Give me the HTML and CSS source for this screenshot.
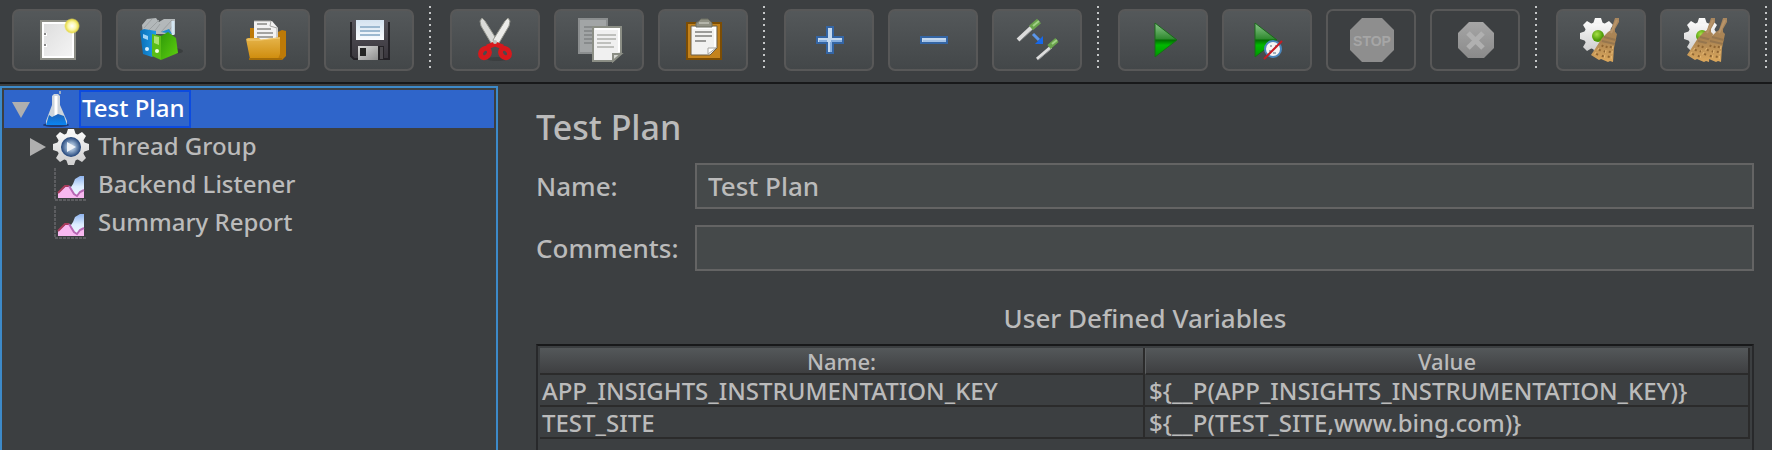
FILE: index.html
```html
<!DOCTYPE html>
<html lang="en">
<head>
<meta charset="utf-8">
<title>Test Plan</title>
<link rel="stylesheet" href="styles.css">
</head>
<body>
<svg class="defs" aria-hidden="true">
  <defs>
    <linearGradient id="paper" x1="0" y1="0" x2="1" y2="1"><stop offset="0" stop-color="#dcdcdc"/><stop offset="1" stop-color="#f6f6f6"/></linearGradient>
    <linearGradient id="folder" x1="0" y1="0" x2="0" y2="1"><stop offset="0" stop-color="#e6b54c"/><stop offset="1" stop-color="#cf8c0c"/></linearGradient>
    <linearGradient id="blue" x1="0" y1="0" x2="1" y2="0"><stop offset="0" stop-color="#0a6fb8"/><stop offset="1" stop-color="#1f9be6"/></linearGradient>
    <linearGradient id="green" x1="0" y1="0" x2="1" y2="1"><stop offset="0" stop-color="#2f9a08"/><stop offset="1" stop-color="#5fd010"/></linearGradient>
    <linearGradient id="disk" x1="0" y1="0" x2="0" y2="1"><stop offset="0" stop-color="#55525a"/><stop offset="1" stop-color="#39363c"/></linearGradient>
    <linearGradient id="label" x1="0" y1="0" x2="0" y2="1"><stop offset="0" stop-color="#d4e2f0"/><stop offset="1" stop-color="#fafcff"/></linearGradient>
    <linearGradient id="metal" x1="0" y1="0" x2="1" y2="1"><stop offset="0" stop-color="#dadada"/><stop offset="1" stop-color="#8e8e8e"/></linearGradient>
    <linearGradient id="play" x1="0" y1="0" x2="0" y2="1"><stop offset="0" stop-color="#8cc68c"/><stop offset=".47" stop-color="#2f8a2f"/><stop offset=".5" stop-color="#006c00"/><stop offset=".65" stop-color="#00b800"/><stop offset="1" stop-color="#009800"/></linearGradient>
    <linearGradient id="broom" x1="0" y1="0" x2="0" y2="1"><stop offset="0" stop-color="#a88760"/><stop offset=".5" stop-color="#ab8452"/><stop offset="1" stop-color="#dca85c"/></linearGradient>
    <linearGradient id="gearfill" x1="0" y1="0" x2="0" y2="1"><stop offset="0" stop-color="#fafafa"/><stop offset="1" stop-color="#cfcfcf"/></linearGradient>
    <linearGradient id="grey" x1="0" y1="0" x2="0" y2="1"><stop offset="0" stop-color="#a6a6a6"/><stop offset="1" stop-color="#8a8a8a"/></linearGradient>
    <linearGradient id="sky" x1="0" y1="0" x2="0" y2="1"><stop offset="0" stop-color="#8fb4ee"/><stop offset=".5" stop-color="#dcecff"/><stop offset="1" stop-color="#f2f9ff"/></linearGradient>
    <linearGradient id="liquid" x1="0" y1="0" x2="0" y2="1"><stop offset="0" stop-color="#1d62b8"/><stop offset="1" stop-color="#0a86f2"/></linearGradient>
    <radialGradient id="hub"><stop offset="0" stop-color="#dfe7f0"/><stop offset=".45" stop-color="#8ea9c9"/><stop offset="1" stop-color="#1f4278"/></radialGradient>
    <radialGradient id="lime" cx=".4" cy=".35"><stop offset="0" stop-color="#a8e048"/><stop offset="1" stop-color="#4f9c08"/></radialGradient>
    <radialGradient id="sun"><stop offset="0" stop-color="#fff"/><stop offset=".5" stop-color="#fbf6a8"/><stop offset=".8" stop-color="#e8dc50"/><stop offset="1" stop-color="#e8dc50" stop-opacity="0"/></radialGradient>
    <g id="gear">
      <circle r="14"/>
      <g id="teeth"><path d="M-5-12-3-18H3L5-12ZM-5 12-3 18H3L5 12ZM12-5 18-3V3L12 5ZM-12-5-18-3V3L-12 5Z"/></g>
      <path d="M-6-12-11-15-15-11-12-6ZM6-12 11-15 15-11 12-6ZM-6 12-11 15-15 11-12 6ZM6 12 11 15 15 11 12 6Z"/>
    </g>
    <g id="brush">
      <path d="M36 0H40V4L36 11V14L38 16 35 30 34 44 31 43 29 44 22 41 20 42 12 37 16 31 23 20 29 14 32 12Z" fill="url(#broom)"/>
      <path d="M25 19 37 22M23 23 36 26" stroke="#96764e" stroke-width="2"/>
      <path d="M24 27 17 38M28 28 23 40M32 28 29 42" stroke="#8f6532" stroke-width="2" stroke-dasharray="2 3"/>
      <path d="M20 30 15 37M27 32 25 41M34 28 32 42" stroke="#e6b872" stroke-dasharray="3 2"/>
      <path d="M38 2 32 15" stroke="#b8946a" stroke-width="2"/>
    </g>
    <g id="chart">
      <path d="M2 1V33H33" fill="none" stroke="#5c5d60" stroke-width="2" stroke-dasharray="3 1"/>
      <path d="M16 23 20 17 22 12 27 9H31V30H24Z" fill="url(#sky)"/>
      <path d="M5 31V26L13 19H17L21 27 24 29 27 25 31 24V31Z" fill="#f8b8f0"/>
      <path d="M5 26 12 19H16" fill="none" stroke="#a83c5c" stroke-width="2"/>
      <path d="M16 19 21 27 24 29 27 25 31 23" fill="none" stroke="#b868b4" stroke-width="2"/>
    </g>
  </defs>
</svg>

<div class="toolbar" role="toolbar" aria-label="Main toolbar">
  <button class="tool" aria-label="New"><svg class="icon" viewBox="0 0 44 44"><path d="M6 3H40V41H6Z" fill="url(#paper)" stroke="#8c8d86" stroke-width="2"/><path d="M8 5H38V39H8Z" fill="none" stroke="#fff" stroke-width="2"/><path d="M9 15h3v3H9zM9 26h3v3H9z" fill="#fff"/><path d="M9 15h2v2H9zM9 26h2v2H9z" fill="#888"/><circle cx="37" cy="8" r="8" fill="url(#sun)"/></svg></button>
  <button class="tool" aria-label="Templates"><svg class="icon" viewBox="0 0 44 44"><ellipse cx="35" cy="33" rx="9" ry="3" fill="#2c2f30" opacity=".5"/><path d="M3 7 8 1 17 0 20 4 25 1 36 1V16H4Z" fill="#b3b8ba"/><path d="M5 10 13 1M9 13 20 2M15 14 21 6M22 14 33 2M28 15 35 6" stroke="#9da1a3"/><path d="M34 3V17" stroke="#d3e6f2" stroke-width="3"/><path d="M1 13 5 11 17 13V36L13 39 4 36Z" fill="url(#blue)"/><path d="M22 14 30 11 33 16Z" fill="#238cc9"/><path d="M4 16 9 18V22L4 20Z" fill="#9fd4f7"/><circle cx="8" cy="31" r="2" fill="#d6eefc"/><path d="M13 16 22 18V42L13 38Z" fill="#59bd16"/><path d="M22 18 29 14 37 20 39 35 22 42Z" fill="url(#green)"/><path d="M15 18 20 19V27L15 25Z" fill="#a9e071"/><circle cx="18" cy="33" r="2" fill="#efffe2"/></svg></button>
  <button class="tool" aria-label="Open"><svg class="icon" viewBox="0 0 44 44"><path d="M7 10H12V14H35L39 12 43 13V38L39 42H7Z" fill="#bd7a08"/><path d="M11 3H29L35 10V24H11Z" fill="#f2f2f2"/><path d="M11 3H28L27 8 34 10V24" fill="none" stroke="#a7a7a4"/><path d="M14 6H24M14 11H28M14 15H30M14 19H30" stroke="#a3a3a0" stroke-width="2"/><path d="M3 21 5 20H16L18 22 37 19V36L35 41H7Z" fill="url(#folder)"/><path d="M4 22H17L37 20" fill="none" stroke="#f2cd78"/><path d="M6 41H39" stroke="#a46c08" stroke-width="2"/></svg></button>
  <button class="tool" aria-label="Save"><svg class="icon" viewBox="0 0 44 44"><path d="M5 2H41L43 4V42H7L3 38V4Z" fill="url(#disk)"/><path d="M4 4V38L7 41H42V4" fill="none" stroke="#232126" stroke-width="2"/><path d="M9 2H37V22H9Z" fill="url(#label)"/><path d="M13 9H33M13 13H33M13 17H33" stroke="#9cb8d0" stroke-width="2"/><path d="M11 28H37V42H11Z" fill="#252327"/><path d="M11 28H31V42H11Z" fill="url(#metal)"/><path d="M33 29H36V41H33Z" fill="#4e4c50"/><path d="M13 30H19V38H13Z" fill="#252525"/></svg></button>
  <span class="separator"></span>
  <button class="tool" aria-label="Cut"><svg class="icon" viewBox="0 0 44 44"><ellipse cx="24" cy="41" rx="10" ry="2" fill="#2c2f30" opacity=".4"/><path d="M9 0 7 3 8 8 18 25 22 26 24 22 12 3Z" fill="#dadbd8" stroke="#96978f"/><path d="M35 0 37 3 36 8 26 25 22 26 20 22 32 3Z" fill="#ecece9" stroke="#96978f"/><g fill="none" stroke="#d8181c" stroke-width="5"><ellipse cx="12" cy="35" rx="4" ry="5" transform="rotate(40 12 35)"/><ellipse cx="32" cy="35" rx="4" ry="5" transform="rotate(-40 32 35)"/><path d="M14 29 22 26 30 29"/></g><circle cx="22" cy="24" r="2" fill="#c2c3bf"/></svg></button>
  <button class="tool" aria-label="Copy"><svg class="icon" viewBox="0 0 44 44"><path d="M2 1H30V35H2Z" fill="#a2a5a6" stroke="#8b8e8f" stroke-width="2"/><path d="M7 9H20M7 13H20M7 17H16M7 21H16M7 25H16" stroke="#888b8c" stroke-width="2"/><path d="M16 9H44V35L36 43H16Z" fill="#f0f0f0" stroke="#8b8e85" stroke-width="2"/><path d="M18 11H42V34" fill="none" stroke="#fff" stroke-width="2"/><path d="M20 17H39M20 21H39M20 25H34M20 29H37" stroke="#bfc0bd" stroke-width="2"/><path d="M36 43V36H44Z" fill="#d5d6d2" stroke="#8b8e85" stroke-width="2"/></svg></button>
  <button class="tool" aria-label="Paste"><svg class="icon" viewBox="0 0 44 44"><path d="M6 5H40V41H6Z" fill="#c4831c" stroke="#7c4d04" stroke-width="2"/><path d="M10 8H36V30L29 37H10Z" fill="#f2f2f0" stroke="#6e6047"/><path d="M12 10H34V29" fill="none" stroke="#fff" stroke-width="2"/><path d="M14 14H31M14 18H31M14 23H25" stroke="#9b9b98" stroke-width="2"/><path d="M27 36V30H35Z" fill="#fff" stroke="#a7a7a2"/><path d="M15 9V5L18 3 20 1H27L29 3 31 5V9Z" fill="#8f9083" stroke="#6d6e62"/><path d="M18 5H28" stroke="#b4b5aa" stroke-width="2"/></svg></button>
  <span class="separator"></span>
  <button class="tool" aria-label="Expand All"><svg class="icon" viewBox="0 0 44 44"><path d="M20 9H26V19H36V25H26V35H20V25H10V19H20Z" fill="#c4d8ee" stroke="#3465a4" stroke-width="2"/><path d="M24 24V34M12 23H20M24 23H35" stroke="#86aede" stroke-width="2"/></svg></button>
  <button class="tool" aria-label="Collapse All"><svg class="icon" viewBox="0 0 44 44"><path d="M10 19H36V25H10Z" fill="#c4d8ee" stroke="#3465a4" stroke-width="2"/><path d="M12 23H35" stroke="#a4c2e6" stroke-width="2"/></svg></button>
  <button class="tool" aria-label="Toggle"><svg class="icon" viewBox="0 0 44 44"><path d="M3 22 17 9" stroke="#dcdcdc" stroke-width="4"/><path d="M22 41 36 29" stroke="#dcdcdc" stroke-width="3"/><path d="M5 23 18 11M23 42 36 31" stroke="#8b8e8f"/><path d="M16 10 24 3" stroke="#6aa24c" stroke-width="6"/><path d="M34 29 42 22" stroke="#6aa24c" stroke-width="5"/><path d="M18 8 24 3M37 26 42 22" stroke="#9fd084" stroke-width="2"/><path d="M18 16 24 22" stroke="#5b96ea" stroke-width="3"/><path d="M28 18V26H20L23 23 25 21Z" fill="#1668ea"/></svg></button>
  <span class="separator"></span>
  <button class="tool" aria-label="Start"><svg class="icon" viewBox="0 0 44 44"><path d="M14 5 36 22 14 39Z" fill="url(#play)" stroke="#1a6a1a"/></svg></button>
  <button class="tool" aria-label="Start no pauses"><svg class="icon" viewBox="0 0 44 44"><path d="M10 5 32 22 10 39Z" fill="url(#play)" stroke="#1a6a1a"/><circle cx="28" cy="31" r="8" fill="#f4f4f4" stroke="#4a86bd" stroke-width="2"/><path d="M25 28h2M30 28h2M24 33h2M28 35h3" stroke="#a4b0ba" stroke-width="2"/><path d="M19 41 37 23" stroke="#c41c24" stroke-width="2"/></svg></button>
  <button class="tool" aria-label="Stop" disabled><svg class="icon" viewBox="0 0 44 44"><path d="M13 0H33L45 12V32L33 44H13L1 32V12Z" fill="#8e8e8e"/><text class="stop-label" x="23" y="28" text-anchor="middle">STOP</text></svg></button>
  <button class="tool" aria-label="Shutdown" disabled><svg class="icon" viewBox="0 0 44 44"><path d="M16 4H30L41 15V30L31 40H15L5 30V15Z" fill="url(#grey)"/><path d="M15 15 30 30M30 15 15 30" stroke="#b0b0b0" stroke-width="5"/></svg></button>
  <span class="separator"></span>
  <button class="tool" aria-label="Clear"><svg class="icon" viewBox="0 0 44 44"><use href="#gear" x="19" y="18" fill="url(#gearfill)"/><circle cx="19" cy="18" r="6" fill="url(#lime)"/><use href="#brush"/></svg></button>
  <button class="tool" aria-label="Clear All"><svg class="icon" viewBox="0 0 44 44"><use href="#gear" x="19" y="18" fill="url(#gearfill)"/><circle cx="19" cy="18" r="6" fill="url(#lime)"/><use href="#brush" x="-8"/><use href="#brush" x="4"/></svg></button>
  <span class="separator"></span>
</div>

<div class="workspace">
  <nav class="tree" aria-label="Test plan tree">
    <ul class="tree-list">
      <li>
        <div class="node selected">
          <button class="toggle" aria-label="Collapse Test Plan"><svg class="arrow" viewBox="0 0 18 18"><path d="M0 2H18L9 18Z" fill="#afafaf"/></svg></button>
          <svg class="flask" viewBox="0 0 26 36"><ellipse cx="13" cy="34" rx="13" ry="2" fill="#1e3c78"/><path d="M9 5 11 3H15L17 5V14L24 30V34H3V30L9 14Z" fill="#cdd5dc"/><path d="M13 5V28" stroke="#fff" stroke-width="3"/><path d="M17 0V3" stroke="#9aabc4" stroke-width="2"/><path d="M6 24 9 26 15 23 21 25 24 34H3Z" fill="url(#liquid)"/></svg>
          <span class="node-label">Test Plan</span>
        </div>
        <ul class="tree-list nested">
          <li class="node">
            <button class="toggle" aria-label="Expand Thread Group"><svg class="arrow" viewBox="0 0 18 18"><path d="M1 0 17 9 1 18Z" fill="#afafaf"/></svg></button>
            <svg class="node-icon" viewBox="-18 -18 36 36"><use href="#gear" fill="url(#gearfill)"/><circle r="10" fill="url(#hub)"/><path d="M-4-5 5 0-4 5Z" fill="#edf2f7"/></svg>
            <span class="node-label">Thread Group</span>
          </li>
          <li class="node">
            <span class="toggle"></span>
            <svg class="node-icon" viewBox="0 0 36 36"><use href="#chart"/></svg>
            <span class="node-label">Backend Listener</span>
          </li>
          <li class="node">
            <span class="toggle"></span>
            <svg class="node-icon" viewBox="0 0 36 36"><use href="#chart"/></svg>
            <span class="node-label">Summary Report</span>
          </li>
        </ul>
      </li>
    </ul>
  </nav>

  <main class="editor">
    <h1 class="title">Test Plan</h1>
    <form class="fields">
      <label for="name">Name:</label>
      <input class="field" id="name" type="text" value="Test Plan">
      <label for="comments">Comments:</label>
      <input class="field" id="comments" type="text">
    </form>
    <h2 class="caption" id="variables">User Defined Variables</h2>
    <div class="table-pane">
      <table class="variables" aria-labelledby="variables">
        <thead><tr><th>Name:</th><th>Value</th></tr></thead>
        <tbody>
          <tr><td>APP_INSIGHTS_INSTRUMENTATION_KEY</td><td>${__P(APP_INSIGHTS_INSTRUMENTATION_KEY)}</td></tr>
          <tr><td>TEST_SITE</td><td>${__P(TEST_SITE,www.bing.com)}</td></tr>
        </tbody>
      </table>
    </div>
  </main>
</div>
</body>
</html>
```
FILE: styles.css
```css
* {
  box-sizing: border-box;
}

body {
  margin: 0;
  height: 100vh;
  display: flex;
  flex-direction: column;
  overflow: hidden;
  background: #3c3f41;
  color: #bbbbbb;
  font-family: "Noto Sans", sans-serif;
  font-size: 26px;
  font-weight: 500;
}

.defs {
  position: absolute;
  width: 0;
  height: 0;
}

.toolbar {
  display: flex;
  align-items: flex-start;
  flex: none;
  gap: 14px;
  padding: 6px 0 11px 12px;
  border-bottom: 2px solid #18191a;
  overflow: hidden;
}

.tool {
  display: flex;
  align-items: center;
  justify-content: center;
  flex: none;
  width: 90px;
  height: 62px;
  margin-top: 3px;
  padding: 0;
  border: 2px solid #585858;
  border-radius: 7px;
  background: linear-gradient(#54585a, #434749);
}

.tool:disabled {
  background: none;
}

.icon {
  width: 44px;
  height: 44px;
  overflow: visible;
}

.stop-label {
  font: bold 14px "Liberation Sans", sans-serif;
  fill: #a6a6a6;
}

.separator {
  flex: none;
  width: 2px;
  height: 62px;
  margin: 0 5px 0 1px;
  background: repeating-linear-gradient(#c4c6c7 0 2px, transparent 2px 6px);
}

.workspace {
  display: flex;
  flex: 1;
  min-height: 0;
}

.tree {
  flex: none;
  width: 498px;
  margin-top: 2px;
  padding: 2px;
  border: 2px solid #3d8ac9;
  border-bottom: 0;
  font-size: 24px;
}

.tree-list {
  margin: 0;
  padding: 0;
  list-style: none;
}

.nested {
  padding-left: 16px;
}

.node {
  display: flex;
  align-items: center;
  height: 38px;
  padding-left: 8px;
}

.nested .node {
  padding-left: 9px;
}

.selected {
  background: #2f65ca;
  color: #ffffff;
}

.toggle {
  display: flex;
  flex: none;
  width: 18px;
  padding: 0;
  border: 0;
  background: none;
}

.arrow {
  width: 18px;
  height: 18px;
}

.flask {
  width: 26px;
  height: 36px;
  margin: 0 10px 0 13px;
}

.node-icon {
  width: 36px;
  height: 36px;
  margin: 0 9px 0 6px;
}

.node-label {
  padding-bottom: 2px;
  line-height: 32px;
}

.selected .node-label {
  padding: 0 4px 2px 1px;
  border: 2px solid #0c4be0;
}

.editor {
  display: flex;
  flex: 1;
  flex-direction: column;
  min-width: 0;
  padding: 23px 18px 0 38px;
}

.title {
  margin: 0 0 16px;
  font-size: 34px;
  font-weight: 500;
  line-height: 40px;
}

.fields {
  display: grid;
  grid-template-columns: 143px 1fr;
  gap: 16px;
  align-items: center;
}

.field {
  width: 100%;
  height: 46px;
  padding: 0 11px;
  border: 2px solid #646464;
  background: #45494a;
  color: inherit;
  font: inherit;
}

.caption {
  margin: 32px 0 11px;
  font-size: 26px;
  font-weight: 500;
  line-height: 30px;
  text-align: center;
}

.table-pane {
  flex: 1;
  padding: 2px;
  border: 2px solid #28292b;
  border-top-color: #18191a;
  border-bottom: 0;
}

.variables {
  width: 100%;
  table-layout: fixed;
  border-spacing: 0;
  font-size: 24px;
}

.variables th {
  height: 27px;
  padding: 1px 0 0;
  border-right: 2px solid #2b2b2b;
  border-bottom: 2px solid #2b2b2b;
  background: linear-gradient(#54585a, #3e3f41);
  font-size: 22px;
  font-weight: 500;
  line-height: 24px;
}

.variables th + th {
  border-left: 1px solid #5e6163;
}

.variables td {
  height: 32px;
  padding: 2px 2px 0;
  border-right: 2px solid #2b2b2b;
  border-bottom: 2px solid #2b2b2b;
  line-height: 28px;
}

.variables td + td {
  padding-left: 4px;
}
```
